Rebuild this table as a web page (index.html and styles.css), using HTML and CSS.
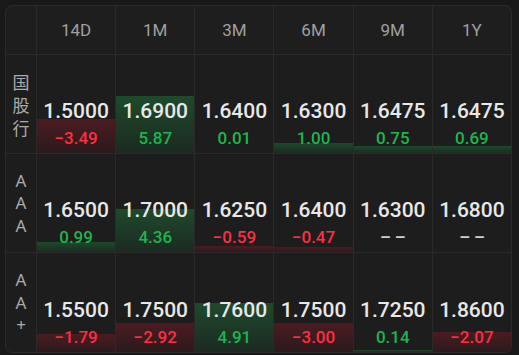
FILE: index.html
```html
<!DOCTYPE html>
<html lang="zh">
<head>
<meta charset="utf-8">
<title>Rates</title>
<link rel="stylesheet" href="styles.css">
</head>
<body>
<div class="grid">
  <div class="hd corner"></div>
  <div class="hd">14D</div>
  <div class="hd">1M</div>
  <div class="hd">3M</div>
  <div class="hd">6M</div>
  <div class="hd">9M</div>
  <div class="hd">1Y</div>

  <div class="lbl"><span>国</span><span>股</span><span>行</span></div>
  <div class="cell"><div class="bar down" style="height:34px"></div><div class="val">1.5000</div><div class="chg down">−3.49</div></div>
  <div class="cell"><div class="bar up" style="height:57px"></div><div class="val">1.6900</div><div class="chg up">5.87</div></div>
  <div class="cell"><div class="bar up" style="height:0px"></div><div class="val">1.6400</div><div class="chg up">0.01</div></div>
  <div class="cell"><div class="bar up" style="height:10px"></div><div class="val">1.6300</div><div class="chg up">1.00</div></div>
  <div class="cell"><div class="bar up" style="height:7px"></div><div class="val">1.6475</div><div class="chg up">0.75</div></div>
  <div class="cell"><div class="bar up" style="height:7px"></div><div class="val">1.6475</div><div class="chg up">0.69</div></div>

  <div class="lbl latin"><span>A</span><span>A</span><span>A</span></div>
  <div class="cell"><div class="bar up" style="height:10px"></div><div class="val">1.6500</div><div class="chg up">0.99</div></div>
  <div class="cell"><div class="bar up" style="height:43px"></div><div class="val">1.7000</div><div class="chg up">4.36</div></div>
  <div class="cell"><div class="bar down" style="height:6px"></div><div class="val">1.6250</div><div class="chg down">−0.59</div></div>
  <div class="cell"><div class="bar down" style="height:5px"></div><div class="val">1.6400</div><div class="chg down">−0.47</div></div>
  <div class="cell"><div class="val">1.6300</div><div class="chg none">––</div></div>
  <div class="cell"><div class="val">1.6800</div><div class="chg none">––</div></div>

  <div class="lbl latin"><span>A</span><span>A</span><span>+</span></div>
  <div class="cell"><div class="bar down" style="height:18px"></div><div class="val">1.5500</div><div class="chg down">−1.79</div></div>
  <div class="cell"><div class="bar down" style="height:29px"></div><div class="val">1.7500</div><div class="chg down">−2.92</div></div>
  <div class="cell"><div class="bar up" style="height:49px"></div><div class="val">1.7600</div><div class="chg up">4.91</div></div>
  <div class="cell"><div class="bar down" style="height:29px"></div><div class="val">1.7500</div><div class="chg down">−3.00</div></div>
  <div class="cell"><div class="bar up" style="height:2px"></div><div class="val">1.7250</div><div class="chg up">0.14</div></div>
  <div class="cell"><div class="bar down" style="height:20px"></div><div class="val">1.8600</div><div class="chg down">−2.07</div></div>
</div>
</body>
</html>
```

FILE: styles.css
```css
html, body {
  margin: 0;
  background: #191919;
}
body {
  padding: 5px;
  font-family: Roboto, "Noto Sans", "Noto Sans CJK SC", sans-serif;
}
.grid {
  width: 505px;
  display: grid;
  grid-template-columns: 30px repeat(6, 1fr);
  grid-template-rows: 48px 98px 98px 99px;
  gap: 1px;
  background: #2a2a2a;
  border: 1px solid #2a2a2a;
  border-radius: 7px;
  overflow: hidden;
}
.hd {
  background: #1e1e1e;
  color: #a0a0a0;
  font-size: 17px;
  display: flex;
  align-items: center;
  justify-content: center;
}
.lbl {
  background: #1d1d1d;
  color: #ababab;
  font-family: "Noto Sans CJK SC", sans-serif;
  font-size: 17px;
  line-height: 23px;
  display: flex;
  flex-direction: column;
  align-items: center;
  justify-content: center;
  padding-top: 1px;
}
.lbl.latin {
  font-family: "Noto Sans", sans-serif;
  line-height: 22.5px;
}
.cell {
  position: relative;
  background: #1d1d1d;
  display: flex;
  flex-direction: column;
  align-items: center;
  justify-content: flex-end;
  padding-bottom: 5px;
}
.bar {
  position: absolute;
  left: 0;
  right: 0;
  bottom: 0;
}
.bar.up {
  background: linear-gradient(to bottom, #1e4a2c, #1c2a21);
}
.bar.down {
  background: linear-gradient(to bottom, #4b1c21, #2a1a1c);
}
.val {
  position: relative;
  color: #e8e8e8;
  font-size: 21px;
  font-weight: 500;
  line-height: 25px;
  margin-bottom: 4px;
}
.chg {
  position: relative;
  font-size: 17px;
  font-weight: 500;
  line-height: 20px;
}
.chg.up { color: #1eb54d; }
.chg.down { color: #ff2e42; }
.chg.none { color: #cfcfcf; letter-spacing: 4px; margin-right: -4px; font-weight: 700; }
```
